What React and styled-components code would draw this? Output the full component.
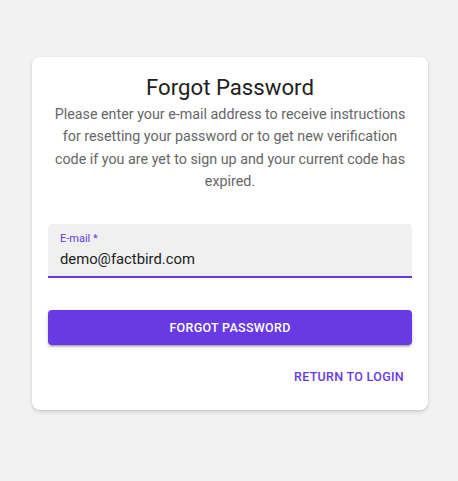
import React from 'react';
import styled, { createGlobalStyle } from 'styled-components';

const GlobalStyle = createGlobalStyle`
  html, body {
    margin: 0;
    padding: 0;
    background: #f2f2f2;
    font-family: Roboto, "Liberation Sans", Arial, sans-serif;
  }
`;

const Page = styled.div`
  min-height: 481px;
  padding: 57px 30px 0 32px;
  box-sizing: border-box;
`;

const Card = styled.div`
  width: 396px;
  box-sizing: border-box;
  background: #ffffff;
  border-radius: 8px;
  box-shadow: 0 2px 4px rgba(0, 0, 0, 0.12), 0 1px 2px rgba(0, 0, 0, 0.08);
  padding: 17px 16px 15px;
  display: flex;
  flex-direction: column;
`;

const Title = styled.h1`
  margin: 0;
  font-size: 22.2px;
  font-weight: 400;
  line-height: 26px;
  color: #222222;
  text-align: center;
`;

const Description = styled.p`
  margin: 3px 0 0;
  font-size: 14.3px;
  line-height: 22.3px;
  color: #666666;
  text-align: center;
`;

const Field = styled.label`
  margin-top: 32px;
  display: flex;
  flex-direction: column;
  background: #f0f0f0;
  border-radius: 4px 4px 0 0;
  border-bottom: 2px solid #673ae4;
  padding: 8px 12px 7px;
`;

const FieldLabel = styled.span`
  font-size: 11px;
  line-height: 13px;
  color: #673ae4;
`;

const FieldInput = styled.input`
  border: none;
  outline: none;
  background: transparent;
  padding: 0;
  margin-top: 4px;
  font-family: inherit;
  font-size: 14.8px;
  line-height: 20px;
  height: 20px;
  color: #222222;
`;

const PrimaryButton = styled.button`
  margin-top: 32px;
  height: 35px;
  border: none;
  border-radius: 4px;
  background: #673ae4;
  color: #ffffff;
  font-family: inherit;
  font-size: 12.5px;
  font-weight: 500;
  letter-spacing: 0.3px;
  text-transform: uppercase;
  box-shadow: 0 3px 1px -2px rgba(0, 0, 0, 0.2), 0 2px 2px rgba(0, 0, 0, 0.14),
    0 1px 5px rgba(0, 0, 0, 0.12);
  cursor: pointer;
`;

const Actions = styled.div`
  margin-top: 14px;
  display: flex;
  justify-content: flex-end;
`;

const TextButton = styled.button`
  border: none;
  background: transparent;
  padding: 8px 8px;
  color: #673ae4;
  font-family: inherit;
  font-size: 12.5px;
  font-weight: 500;
  line-height: 20px;
  letter-spacing: 0.3px;
  text-transform: uppercase;
  cursor: pointer;
`;

export default function App() {
  return (
    <>
      <GlobalStyle />
      <Page>
        <Card>
          <Title>Forgot Password</Title>
          <Description>
            Please enter your e-mail address to receive instructions for resetting your
            password or to get new verification code if you are yet to sign up and your
            current code has expired.
          </Description>
          <Field>
            <FieldLabel>E-mail *</FieldLabel>
            <FieldInput defaultValue="demo@factbird.com" />
          </Field>
          <PrimaryButton>Forgot Password</PrimaryButton>
          <Actions>
            <TextButton>Return to login</TextButton>
          </Actions>
        </Card>
      </Page>
    </>
  );
}
